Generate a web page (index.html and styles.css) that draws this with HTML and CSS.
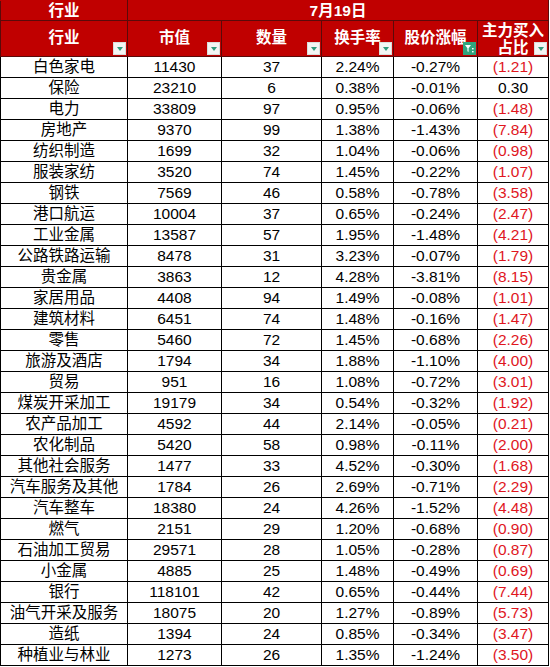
FILE: index.html
```html
<!DOCTYPE html>
<html lang="zh">
<head>
<meta charset="utf-8">
<link rel="stylesheet" href="styles.css">
</head>
<body>
<table class="sheet">
  <colgroup>
    <col class="c1"><col class="c2"><col class="c3"><col class="c4"><col class="c5"><col class="c6">
  </colgroup>
  <thead>
    <tr class="h1">
      <th>行业</th>
      <th colspan="5">7月19日</th>
    </tr>
    <tr class="h2">
      <th><span class="lbl">行业</span><span class="flt"></span></th>
      <th><span class="lbl">市值</span><span class="flt"></span></th>
      <th><span class="lbl">数量</span><span class="flt"></span></th>
      <th><span class="lbl">换手率</span><span class="flt"></span></th>
      <th><span class="lbl">股价涨幅</span><span class="flt on"><svg viewBox="0 0 13 13" width="13" height="13"><path d="M2 3h6L5.6 6.2V10L4.4 9.2V6.2Z" fill="#fff"/><rect x="9" y="6" width="1.6" height="1.4" fill="#fff"/><rect x="9" y="9" width="1.6" height="1.4" fill="#fff"/></svg></span></th>
      <th><span class="lbl two">主力买入<br>占比</span><span class="flt"></span></th>
    </tr>
  </thead>
  <tbody>
    <tr><td>白色家电</td><td>11430</td><td>37</td><td>2.24%</td><td>-0.27%</td><td class="neg">(1.21)</td></tr>
    <tr><td>保险</td><td>23210</td><td>6</td><td>0.38%</td><td>-0.01%</td><td>0.30</td></tr>
    <tr><td>电力</td><td>33809</td><td>97</td><td>0.95%</td><td>-0.06%</td><td class="neg">(1.48)</td></tr>
    <tr><td>房地产</td><td>9370</td><td>99</td><td>1.38%</td><td>-1.43%</td><td class="neg">(7.84)</td></tr>
    <tr><td>纺织制造</td><td>1699</td><td>32</td><td>1.04%</td><td>-0.06%</td><td class="neg">(0.98)</td></tr>
    <tr><td>服装家纺</td><td>3520</td><td>74</td><td>1.45%</td><td>-0.22%</td><td class="neg">(1.07)</td></tr>
    <tr><td>钢铁</td><td>7569</td><td>46</td><td>0.58%</td><td>-0.78%</td><td class="neg">(3.58)</td></tr>
    <tr><td>港口航运</td><td>10004</td><td>37</td><td>0.65%</td><td>-0.24%</td><td class="neg">(2.47)</td></tr>
    <tr><td>工业金属</td><td>13587</td><td>57</td><td>1.95%</td><td>-1.48%</td><td class="neg">(4.21)</td></tr>
    <tr><td>公路铁路运输</td><td>8478</td><td>31</td><td>3.23%</td><td>-0.07%</td><td class="neg">(1.79)</td></tr>
    <tr><td>贵金属</td><td>3863</td><td>12</td><td>4.28%</td><td>-3.81%</td><td class="neg">(8.15)</td></tr>
    <tr><td>家居用品</td><td>4408</td><td>94</td><td>1.49%</td><td>-0.08%</td><td class="neg">(1.01)</td></tr>
    <tr><td>建筑材料</td><td>6451</td><td>74</td><td>1.48%</td><td>-0.16%</td><td class="neg">(1.47)</td></tr>
    <tr><td>零售</td><td>5460</td><td>72</td><td>1.45%</td><td>-0.68%</td><td class="neg">(2.26)</td></tr>
    <tr><td>旅游及酒店</td><td>1794</td><td>34</td><td>1.88%</td><td>-1.10%</td><td class="neg">(4.00)</td></tr>
    <tr><td>贸易</td><td>951</td><td>16</td><td>1.08%</td><td>-0.72%</td><td class="neg">(3.01)</td></tr>
    <tr><td>煤炭开采加工</td><td>19179</td><td>34</td><td>0.54%</td><td>-0.32%</td><td class="neg">(1.92)</td></tr>
    <tr><td>农产品加工</td><td>4592</td><td>44</td><td>2.14%</td><td>-0.05%</td><td class="neg">(0.21)</td></tr>
    <tr><td>农化制品</td><td>5420</td><td>58</td><td>0.98%</td><td>-0.11%</td><td class="neg">(2.00)</td></tr>
    <tr><td>其他社会服务</td><td>1477</td><td>33</td><td>4.52%</td><td>-0.30%</td><td class="neg">(1.68)</td></tr>
    <tr><td>汽车服务及其他</td><td>1784</td><td>26</td><td>2.69%</td><td>-0.71%</td><td class="neg">(2.29)</td></tr>
    <tr><td>汽车整车</td><td>18380</td><td>24</td><td>4.26%</td><td>-1.52%</td><td class="neg">(4.48)</td></tr>
    <tr><td>燃气</td><td>2151</td><td>29</td><td>1.20%</td><td>-0.68%</td><td class="neg">(0.90)</td></tr>
    <tr><td>石油加工贸易</td><td>29571</td><td>28</td><td>1.05%</td><td>-0.28%</td><td class="neg">(0.87)</td></tr>
    <tr><td>小金属</td><td>4885</td><td>25</td><td>1.48%</td><td>-0.49%</td><td class="neg">(0.69)</td></tr>
    <tr><td>银行</td><td>118101</td><td>42</td><td>0.65%</td><td>-0.44%</td><td class="neg">(7.44)</td></tr>
    <tr><td>油气开采及服务</td><td>18075</td><td>20</td><td>1.27%</td><td>-0.89%</td><td class="neg">(5.73)</td></tr>
    <tr><td>造纸</td><td>1394</td><td>24</td><td>0.85%</td><td>-0.34%</td><td class="neg">(3.47)</td></tr>
    <tr><td>种植业与林业</td><td>1273</td><td>26</td><td>1.35%</td><td>-1.24%</td><td class="neg">(3.50)</td></tr>
  </tbody>
</table>
</body>
</html>
```

FILE: styles.css
```css
html, body {
  margin: 0;
  padding: 0;
  background: #fff;
}

.sheet {
  border-collapse: collapse;
  table-layout: fixed;
  width: 549px;
  font-family: "Liberation Sans", "Noto Sans CJK SC", sans-serif;
  font-size: 15.5px;
  color: #000;
}

.c1 { width: 127px; }
.c2 { width: 94px; }
.c3 { width: 100px; }
.c4 { width: 72px; }
.c5 { width: 84px; }
.c6 { width: 71px; }

.sheet th {
  background: #c00000;
  color: #fff;
  font-weight: bold;
  border: 1px solid #5a0a0a;
  padding: 0;
  text-align: center;
  position: relative;
}

.h1 th {
  height: 19px;
  line-height: 19px;
  border-top-color: #c00000;
}

.h2 th {
  height: 35px;
  line-height: 18px;
}

.lbl {
  display: block;
  padding-bottom: 2px;
}

.lbl.two {
  line-height: 17px;
  padding-bottom: 0;
}

.flt {
  position: absolute;
  right: 1px;
  bottom: 1px;
  width: 13px;
  height: 13px;
  box-sizing: border-box;
  background: #f3f5f4;
  border: 1px solid #d9dedb;
}

.flt::after {
  content: "";
  position: absolute;
  left: 3px;
  top: 4px;
  border-left: 3px solid transparent;
  border-right: 3px solid transparent;
  border-top: 4px solid #2f9b7c;
}

.flt.on {
  background: #2fa57e;
  border-color: #2fa57e;
}

.flt.on::after {
  display: none;
}

.flt svg {
  display: block;
  position: absolute;
  left: -1px;
  top: -1px;
}

.sheet td {
  border: 1px solid #000;
  height: 20px;
  line-height: 20px;
  padding: 0;
  text-align: center;
  white-space: nowrap;
}

.sheet td.neg {
  color: #e0161e;
}
```
